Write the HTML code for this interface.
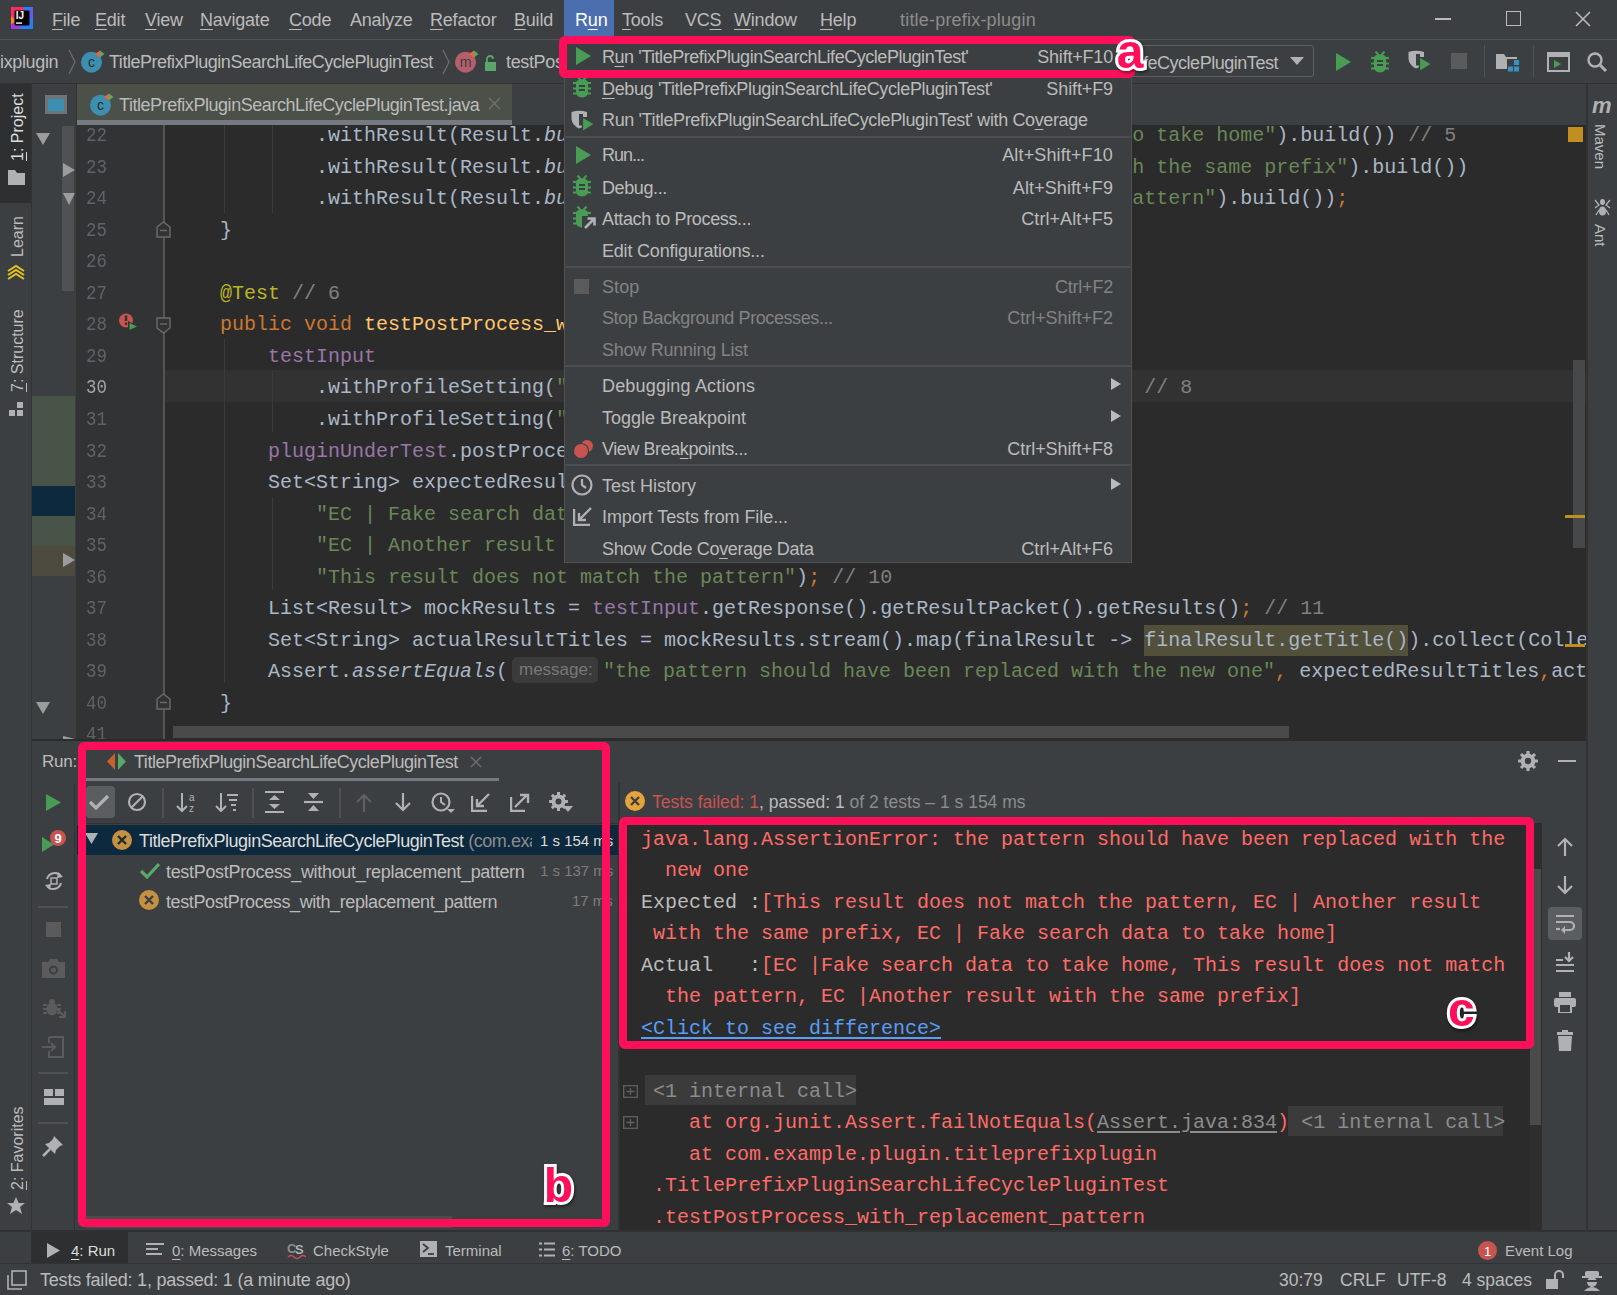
<!DOCTYPE html><html><head><meta charset="utf-8"><style>
*{margin:0;padding:0;box-sizing:border-box}
html,body{width:1617px;height:1295px;overflow:hidden;background:#3c3f41;font-family:"Liberation Sans", sans-serif;}
.a{position:absolute}
.t{position:absolute;white-space:pre;color:#bbbbbb;font-family:"Liberation Sans", sans-serif;font-size:17.5px;line-height:20px}
.m{position:absolute;white-space:pre;font-family:"Liberation Mono", monospace;font-size:20px;line-height:31.55px;color:#a9b7c6}
u{text-decoration:underline;text-underline-offset:3px}
.kw{color:#cc7832} .str{color:#6a8759} .ann{color:#bbb529} .cm{color:#808080} .fn{color:#ffc66d} .fld{color:#9876aa} .it{font-style:italic}
</style></head><body>
<div class="a" style="left:0;top:0;width:1617px;height:39px;background:#3c3f41"></div>
<div class="a" style="left:0;top:39px;width:1617px;height:1px;background:#515658"></div>
<svg class="a" style="left:11px;top:7px" width="22" height="22" viewBox="0 0 22 22">
<rect x="0" y="0" width="22" height="22" fill="#2a7ef5"/><path d="M0 0H11.5L14 3.5L9 14L0 22Z" fill="#fd2a63"/><path d="M0 9L3.5 12L3 18L0 20Z" fill="#f98a1c"/><path d="M0 17L4 15L11 19L7 22H0Z" fill="#a23ad8"/><path d="M19 2L22 0V10L19 12Z" fill="#6f55e8"/>
<rect x="3.5" y="3.5" width="15" height="15" rx="1" fill="#000"/>
<text x="4.8" y="12.3" font-family="Liberation Sans" font-weight="bold" font-size="10" fill="#fff">IJ</text><rect x="5" y="15.3" width="6" height="1.6" fill="#ddd"/></svg>
<div class="t" style="left:52px;top:9.76px;font-size:18px;letter-spacing:-0.2px;color:#bbbbbb;"><u>F</u>ile</div>
<div class="t" style="left:95px;top:9.76px;font-size:18px;letter-spacing:-0.2px;color:#bbbbbb;"><u>E</u>dit</div>
<div class="t" style="left:145px;top:9.76px;font-size:18px;letter-spacing:-0.2px;color:#bbbbbb;"><u>V</u>iew</div>
<div class="t" style="left:200px;top:9.76px;font-size:18px;letter-spacing:-0.2px;color:#bbbbbb;"><u>N</u>avigate</div>
<div class="t" style="left:289px;top:9.76px;font-size:18px;letter-spacing:-0.2px;color:#bbbbbb;"><u>C</u>ode</div>
<div class="t" style="left:350px;top:9.76px;font-size:18px;letter-spacing:-0.2px;color:#bbbbbb;">Analyze</div>
<div class="t" style="left:430px;top:9.76px;font-size:18px;letter-spacing:-0.2px;color:#bbbbbb;"><u>R</u>efactor</div>
<div class="t" style="left:514px;top:9.76px;font-size:18px;letter-spacing:-0.2px;color:#bbbbbb;"><u>B</u>uild</div>
<div class="a" style="left:564px;top:0;width:50px;height:39px;background:#4b6eaf"></div>
<div class="t" style="left:575px;top:9.76px;font-size:18px;letter-spacing:-0.2px;color:#ffffff;">R<u>u</u>n</div>
<div class="t" style="left:622px;top:9.76px;font-size:18px;letter-spacing:-0.2px;color:#bbbbbb;"><u>T</u>ools</div>
<div class="t" style="left:685px;top:9.76px;font-size:18px;letter-spacing:-0.2px;color:#bbbbbb;">VC<u>S</u></div>
<div class="t" style="left:734px;top:9.76px;font-size:18px;letter-spacing:-0.2px;color:#bbbbbb;"><u>W</u>indow</div>
<div class="t" style="left:820px;top:9.76px;font-size:18px;letter-spacing:-0.2px;color:#bbbbbb;"><u>H</u>elp</div>
<div class="t" style="left:900px;top:9.76px;font-size:18px;letter-spacing:0.2px;color:#8c8c8c;">title-prefix-plugin</div>
<div class="a" style="left:1435px;top:18px;width:16px;height:1.5px;background:#bbbbbb"></div>
<div class="a" style="left:1506px;top:11px;width:15px;height:15px;border:1.5px solid #bbbbbb"></div>
<svg class="a" style="left:1575px;top:11px" width="16" height="16"><path d="M1 1L15 15M15 1L1 15" stroke="#bbbbbb" stroke-width="1.5"/></svg>
<div class="a" style="left:0;top:40px;width:1617px;height:43px;background:#3c3f41"></div>
<div class="a" style="left:0;top:83px;width:1617px;height:1px;background:#323232"></div>
<div class="t" style="left:0px;top:52.36px;font-size:18px;letter-spacing:-0.35px;color:#bbbbbb;">ixplugin</div>
<svg class="a" style="left:67px;top:49px" width="10" height="26"><path d="M2 1L8 13L2 25" stroke="#6e6e6e" fill="none" stroke-width="1.2"/></svg>
<svg class="a" style="left:81px;top:49px" width="24" height="24" viewBox="0 0 24 24"><circle cx="10.5" cy="13.2" r="10.5" fill="#3d8fb0"/><text x="10.5" y="18" text-anchor="middle" font-family="Liberation Sans" font-size="14" fill="#2b2b2b">c</text><path d="M14 5L19 1.5L19 8.5Z" fill="#e8683a"/><path d="M19 1.5L23.5 5L19 8.5Z" fill="#59a869"/></svg>
<div class="t" style="left:109px;top:52.36px;font-size:18px;letter-spacing:-0.47px;color:#bbbbbb;">TitlePrefixPluginSearchLifeCyclePluginTest</div>
<svg class="a" style="left:441px;top:49px" width="10" height="26"><path d="M2 1L8 13L2 25" stroke="#6e6e6e" fill="none" stroke-width="1.2"/></svg>
<svg class="a" style="left:455px;top:49px" width="24" height="24" viewBox="0 0 24 24"><circle cx="10.5" cy="13.2" r="10.5" fill="#b55e6c"/><text x="10.5" y="18" text-anchor="middle" font-family="Liberation Sans" font-size="14" fill="#3c3f41">m</text><path d="M14 5L19 1.5L19 8.5Z" fill="#e8683a"/><path d="M19 1.5L23.5 5L19 8.5Z" fill="#59a869"/></svg>
<svg class="a" style="left:482px;top:54px" width="16" height="18"><rect x="3" y="8" width="11" height="9" fill="#59a869"/><path d="M5 8V5a3 3 0 0 1 6 0" stroke="#59a869" fill="none" stroke-width="1.8"/></svg>
<div class="t" style="left:506px;top:52.36px;font-size:18px;letter-spacing:-0.35px;color:#bbbbbb;">testPostProcess_with_replacement_pattern</div>
<div class="a" style="left:1100px;top:45px;width:214px;height:32px;border:1px solid #5e6060;border-radius:3px;background:#3c3f41"></div>
<div class="a" style="left:1101px;top:46px;width:190px;height:30px;overflow:hidden"><div class="t" style="right:13px;top:6.76px;font-size:18px;letter-spacing:-0.47px;color:#bbbbbb;">TitlePrefixPluginSearchLifeCyclePluginTest</div></div>
<svg class="a" style="left:1290px;top:57px" width="14" height="9"><path d="M0 0H14L7 8Z" fill="#afb1b3"/></svg>
<svg class="a" style="left:1336px;top:53px" width="15" height="18"><path d="M0 0L15 9.0L0 18Z" fill="#499c54"/></svg>
<svg class="a" style="left:1371px;top:51px" width="18" height="22" viewBox="0 0 18 22"><path d="M4.5 0.5L8 4.5M13.5 0.5L10 4.5" stroke="#499c54" stroke-width="2"/><path d="M3 7Q3 3.5 9 3.5Q15 3.5 15 7V15Q15 21.5 9 21.5Q3 21.5 3 15Z" fill="#499c54"/><rect x="0" y="6" width="18" height="2" fill="#499c54"/><rect x="0" y="11.5" width="18" height="2" fill="#499c54"/><rect x="0" y="16.5" width="18" height="2" fill="#499c54"/><rect x="6" y="9" width="6" height="2" fill="#3c3f41"/><rect x="6" y="13" width="6" height="2" fill="#3c3f41"/></svg>
<svg class="a" style="left:1408px;top:50px" width="24" height="22" viewBox="0 0 24 22"><path d="M0.5 2Q8 -0.5 16 2V7H12V4H8V15.5H12V16.5Q10 18 8 18.5Q1 15 0.5 9Z" fill="#afb1b3"/><path d="M11.5 7L23.5 14L11.5 21.5Z" fill="#499c54" stroke="#3c3f41" stroke-width="1.2"/></svg>
<div class="a" style="left:1451px;top:53px;width:16px;height:16px;background:#5b5b5b"></div>
<div class="a" style="left:1484px;top:45px;width:1px;height:32px;background:#515151"></div>
<svg class="a" style="left:1496px;top:51px" width="24" height="22"><path d="M0 3H8L10 6H21V18H0Z" fill="#afb1b3"/><rect x="11" y="8" width="13" height="14" fill="#3c3f41"/><rect x="18" y="9" width="5" height="5" fill="#3592c4"/><rect x="12" y="15.5" width="5" height="5" fill="#3592c4"/><rect x="18" y="15.5" width="5" height="5" fill="#3592c4"/></svg>
<div class="a" style="left:1533px;top:45px;width:1px;height:32px;background:#515151"></div>
<svg class="a" style="left:1547px;top:52px" width="23" height="20"><rect x="1" y="1" width="21" height="18" fill="none" stroke="#afb1b3" stroke-width="2"/><rect x="1" y="1" width="21" height="4" fill="#afb1b3"/><path d="M7 8L14 12L7 16Z" fill="#499c54"/></svg>
<svg class="a" style="left:1586px;top:51px" width="22" height="22"><circle cx="9" cy="9" r="6.5" stroke="#afb1b3" stroke-width="2.4" fill="none"/><path d="M14 14L20 20" stroke="#afb1b3" stroke-width="3"/></svg>
<div class="a" style="left:0;top:84px;width:31px;height:1148px;background:#3c3f41"></div>
<div class="a" style="left:0;top:84px;width:31px;height:119px;background:#2d2f30"></div>
<div class="a" style="left:31px;top:84px;width:1px;height:1148px;background:#323232"></div>
<div class="t" style="left:18px;top:161px;font-size:16px;line-height:16px;color:#dddddd;transform-origin:0 0;transform:rotate(-90deg) translate(0,-8.0px)"><u>1</u>: Project</div>
<svg class="a" style="left:8px;top:170px" width="17" height="15"><path d="M0 0H7L9 3H17V15H0Z" fill="#afb1b3"/></svg>
<div class="t" style="left:18px;top:257px;font-size:16px;line-height:16px;color:#bbbbbb;transform-origin:0 0;transform:rotate(-90deg) translate(0,-8.0px)">Learn</div>
<svg class="a" style="left:6px;top:264px" width="20" height="18"><path d="M2 7L10 2L18 7M2 11L10 6L18 11M2 15L10 10L18 15" stroke="#e5c31c" stroke-width="2" fill="none"/></svg>
<div class="t" style="left:18px;top:392px;font-size:16px;line-height:16px;color:#bbbbbb;transform-origin:0 0;transform:rotate(-90deg) translate(0,-8.0px)"><u>7</u>: Structure</div>
<svg class="a" style="left:9px;top:401px" width="15" height="15"><rect x="0" y="9" width="6" height="6" fill="#afb1b3"/><rect x="8" y="9" width="6" height="6" fill="#afb1b3"/><rect x="8" y="1" width="6" height="6" fill="#afb1b3"/></svg>
<div class="t" style="left:18px;top:1190px;font-size:16px;line-height:16px;color:#bbbbbb;transform-origin:0 0;transform:rotate(-90deg) translate(0,-8.0px)"><u>2</u>: Favorites</div>
<svg class="a" style="left:7px;top:1197px" width="18" height="17"><path d="M9 0L11.6 6H18L13 10L15 17L9 13L3 17L5 10L0 6H6.4Z" fill="#afb1b3"/></svg>
<div class="a" style="left:32px;top:84px;width:44px;height:657px;background:#3c3f41"></div>
<div class="a" style="left:76px;top:84px;width:1px;height:657px;background:#323232"></div>
<svg class="a" style="left:45px;top:95px" width="22" height="19"><rect x="0" y="0" width="22" height="19" fill="#6f7577"/><rect x="3" y="4" width="16" height="12" fill="#3b90b2"/></svg>
<div class="a" style="left:62px;top:126px;width:12px;height:165px;background:#4f5255"></div>
<svg class="a" style="left:36px;top:133px" width="14" height="12"><path d="M0 0H14L7.0 12Z" fill="#9c9c9c"/></svg>
<svg class="a" style="left:63px;top:163px" width="12" height="14"><path d="M0 0L12 7.0L0 14Z" fill="#9c9c9c"/></svg>
<svg class="a" style="left:63px;top:193px" width="12" height="12"><path d="M0 0H12L6.0 12Z" fill="#9c9c9c"/></svg>
<div class="a" style="left:32px;top:396px;width:43px;height:90px;background:#495449"></div>
<div class="a" style="left:32px;top:486px;width:43px;height:30px;background:#0d293e"></div>
<div class="a" style="left:32px;top:516px;width:43px;height:30px;background:#495449"></div>
<div class="a" style="left:32px;top:546px;width:43px;height:30px;background:#4d4a40"></div>
<svg class="a" style="left:63px;top:553px" width="12" height="14"><path d="M0 0L12 7.0L0 14Z" fill="#9c9c9c"/></svg>
<svg class="a" style="left:36px;top:702px" width="14" height="12"><path d="M0 0H14L7.0 12Z" fill="#9c9c9c"/></svg>
<svg class="a" style="left:63px;top:736px" width="12" height="6"><path d="M0 0L12 3.0L0 6Z" fill="#9c9c9c"/></svg>
<div class="a" style="left:77px;top:84px;width:1510px;height:41px;background:#3c3f41"></div>
<div class="a" style="left:77px;top:84px;width:435px;height:36px;background:#4b5048"></div>
<div class="a" style="left:77px;top:120px;width:435px;height:5px;background:#747a80"></div>
<svg class="a" style="left:90px;top:92px" width="24" height="24" viewBox="0 0 24 24"><circle cx="10.5" cy="13.2" r="10.5" fill="#3d8fb0"/><text x="10.5" y="18" text-anchor="middle" font-family="Liberation Sans" font-size="14" fill="#2b2b2b">c</text><path d="M14 5L19 1.5L19 8.5Z" fill="#e8683a"/><path d="M19 1.5L23.5 5L19 8.5Z" fill="#59a869"/></svg>
<div class="t" style="left:119px;top:94.76px;font-size:18px;letter-spacing:-0.45px;color:#bbbbbb;">TitlePrefixPluginSearchLifeCyclePluginTest.java</div>
<svg class="a" style="left:488px;top:97px" width="13" height="13"><path d="M1 1L12 12M12 1L1 12" stroke="#707070" stroke-width="1.4"/></svg>
<div class="a" style="left:77px;top:125px;width:1510px;height:614px;background:#2b2b2b;overflow:hidden">
<div class="a" style="left:0;top:0;width:87px;height:614px;background:#313335"></div>
<div class="a" style="left:87px;top:245.4px;width:1423px;height:32px;background:#323232"></div>
<div class="m" style="left:9px;top:-5.0px;color:#606366;transform:scaleX(0.87);transform-origin:0 0">22</div>
<div class="m" style="left:9px;top:26.55px;color:#606366;transform:scaleX(0.87);transform-origin:0 0">23</div>
<div class="m" style="left:9px;top:58.1px;color:#606366;transform:scaleX(0.87);transform-origin:0 0">24</div>
<div class="m" style="left:9px;top:89.65px;color:#606366;transform:scaleX(0.87);transform-origin:0 0">25</div>
<div class="m" style="left:9px;top:121.2px;color:#606366;transform:scaleX(0.87);transform-origin:0 0">26</div>
<div class="m" style="left:9px;top:152.75px;color:#606366;transform:scaleX(0.87);transform-origin:0 0">27</div>
<div class="m" style="left:9px;top:184.3px;color:#606366;transform:scaleX(0.87);transform-origin:0 0">28</div>
<div class="m" style="left:9px;top:215.85px;color:#606366;transform:scaleX(0.87);transform-origin:0 0">29</div>
<div class="m" style="left:9px;top:247.4px;color:#a4a3a3;transform:scaleX(0.87);transform-origin:0 0">30</div>
<div class="m" style="left:9px;top:278.95px;color:#606366;transform:scaleX(0.87);transform-origin:0 0">31</div>
<div class="m" style="left:9px;top:310.5px;color:#606366;transform:scaleX(0.87);transform-origin:0 0">32</div>
<div class="m" style="left:9px;top:342.05px;color:#606366;transform:scaleX(0.87);transform-origin:0 0">33</div>
<div class="m" style="left:9px;top:373.6px;color:#606366;transform:scaleX(0.87);transform-origin:0 0">34</div>
<div class="m" style="left:9px;top:405.15000000000003px;color:#606366;transform:scaleX(0.87);transform-origin:0 0">35</div>
<div class="m" style="left:9px;top:436.7px;color:#606366;transform:scaleX(0.87);transform-origin:0 0">36</div>
<div class="m" style="left:9px;top:468.25px;color:#606366;transform:scaleX(0.87);transform-origin:0 0">37</div>
<div class="m" style="left:9px;top:499.8px;color:#606366;transform:scaleX(0.87);transform-origin:0 0">38</div>
<div class="m" style="left:9px;top:531.35px;color:#606366;transform:scaleX(0.87);transform-origin:0 0">39</div>
<div class="m" style="left:9px;top:562.9px;color:#606366;transform:scaleX(0.87);transform-origin:0 0">40</div>
<div class="m" style="left:9px;top:594.45px;color:#606366;transform:scaleX(0.87);transform-origin:0 0">41</div>
<div class="a" style="left:85.5px;top:0;width:2px;height:614px;background:#555555"></div>
<div class="a" style="left:147px;top:0px;width:1px;height:88px;background:#3b3b3b"></div>
<div class="a" style="left:195px;top:0px;width:1px;height:88px;background:#3b3b3b"></div>
<div class="a" style="left:147px;top:214px;width:1px;height:344px;background:#3b3b3b"></div>
<div class="a" style="left:195px;top:246px;width:1px;height:61px;background:#3b3b3b"></div>
<div class="a" style="left:195px;top:372px;width:1px;height:93px;background:#3b3b3b"></div>
<svg class="a" style="left:79px;top:96px" width="15" height="17"><path d="M1 16V6L7.5 1L14 6V16Z" fill="#313335" stroke="#6b6b6b" stroke-width="1.4"/><path d="M4 9.5H11" stroke="#6b6b6b" stroke-width="1.4"/></svg>
<svg class="a" style="left:79px;top:192px" width="15" height="17"><path d="M1 1V11L7.5 16L14 11V1Z" fill="#313335" stroke="#6b6b6b" stroke-width="1.4"/><path d="M4 7H11" stroke="#6b6b6b" stroke-width="1.4"/></svg>
<svg class="a" style="left:79px;top:568px" width="15" height="17"><path d="M1 16V6L7.5 1L14 6V16Z" fill="#313335" stroke="#6b6b6b" stroke-width="1.4"/><path d="M4 9.5H11" stroke="#6b6b6b" stroke-width="1.4"/></svg>
<svg class="a" style="left:41px;top:188px" width="22" height="20"><circle cx="8" cy="7.5" r="7" fill="#c75450"/><rect x="6.8" y="2.5" width="2.4" height="5.5" fill="#313335"/><rect x="6.8" y="9.5" width="2.4" height="2.4" fill="#313335"/><path d="M10 8L20 13.5L10 19Z" fill="#313335"/><path d="M11.5 10L19 13.5L11.5 17Z" fill="#499c54"/></svg>
<div class="m" style="left:95px;top:-5.0px">            .withResult(Result.<span class="it">bu</span>                                               <span class="str">o take home&quot;</span>).build()) <span class="cm">// 5</span></div>
<div class="m" style="left:95px;top:26.55px">            .withResult(Result.<span class="it">bu</span>                                               <span class="str">h the same prefix&quot;</span>).build())</div>
<div class="m" style="left:95px;top:58.1px">            .withResult(Result.<span class="it">bu</span>                                               <span class="str">attern&quot;</span>).build())<span class="kw">;</span></div>
<div class="m" style="left:95px;top:89.65px">    }</div>
<div class="m" style="left:95px;top:152.75px">    <span class="ann">@Test</span> <span class="cm">// 6</span></div>
<div class="m" style="left:95px;top:184.3px">    <span class="kw">public void </span><span class="fn">testPostProcess_w</span></div>
<div class="m" style="left:95px;top:215.85px">        <span class="fld">testInput</span></div>
<div class="m" style="left:95px;top:247.4px">            .withProfileSetting(<span class="str">&quot;</span>                                                <span class="cm">// 8</span></div>
<div class="m" style="left:95px;top:278.95px">            .withProfileSetting(<span class="str">&quot;</span></div>
<div class="m" style="left:95px;top:310.5px">        <span class="fld">pluginUnderTest</span>.postProce</div>
<div class="m" style="left:95px;top:342.05px">        Set&lt;String&gt; expectedResul</div>
<div class="m" style="left:95px;top:373.6px">            <span class="str">&quot;EC | Fake search dat</span></div>
<div class="m" style="left:95px;top:405.15000000000003px">            <span class="str">&quot;EC | Another result </span></div>
<div class="m" style="left:95px;top:436.7px">            <span class="str">&quot;This result does not match the pattern&quot;</span>)<span class="kw">;</span> <span class="cm">// 10</span></div>
<div class="m" style="left:95px;top:468.25px">        List&lt;Result&gt; mockResults = <span class="fld">testInput</span>.getResponse().getResultPacket().getResults()<span class="kw">;</span> <span class="cm">// 11</span></div>
<div class="a" style="left:1067px;top:500.3px;width:264px;height:31px;background:#524f3b"></div>
<div class="m" style="left:95px;top:499.8px">        Set&lt;String&gt; actualResultTitles = mockResults.stream().map(finalResult -&gt; finalResult.getTitle()).collect(Colle</div>
<div class="m" style="left:95px;top:531.35px">        Assert.<span class="it">assertEquals</span>(</div>
<div class="a" style="left:435px;top:532px;width:86px;height:26px;background:#3b3b3b;border-radius:5px"></div>
<div class="t" style="left:442px;top:535px;font-size:17px;color:#787878">message:</div>
<div class="m" style="left:526px;top:531.35px"><span class="str">&quot;the pattern should have been replaced with the new one&quot;</span><span class="kw">,</span> expectedResultTitles<span class="kw">,</span>act</div>
<div class="m" style="left:95px;top:562.9px">    }</div>
<div class="a" style="left:96px;top:601px;width:1116px;height:12px;background:#4a4a4a"></div>
<div class="a" style="left:1496px;top:235px;width:12px;height:188px;background:#46484a"></div>
<div class="a" style="left:1491px;top:2px;width:15px;height:15px;background:#c08f20"></div>
<div class="a" style="left:1488px;top:390px;width:20px;height:3px;background:#c08f20"></div>
<div class="a" style="left:1488px;top:519px;width:20px;height:3px;background:#c08f20"></div>
</div>
<div class="a" style="left:32px;top:739px;width:1555px;height:2px;background:#2b2b2b"></div>
<div class="a" style="left:1586px;top:84px;width:2px;height:1148px;background:#323232"></div>
<div class="a" style="left:1588px;top:84px;width:29px;height:1148px;background:#3c3f41"></div>
<div class="t" style="left:1592px;top:96px;font-size:22px;font-weight:bold;font-style:italic;color:#afb1b3;letter-spacing:-1px">m</div>
<div class="t" style="left:1608px;top:124px;font-size:15px;line-height:15px;color:#bbbbbb;transform-origin:0 0;transform:rotate(90deg)">Maven</div>
<svg class="a" style="left:1594px;top:198px" width="17" height="18"><ellipse cx="8.5" cy="4" rx="2.5" ry="3" fill="#afb1b3"/><ellipse cx="8.5" cy="13" rx="3.5" ry="4.5" fill="#afb1b3"/><path d="M1 2L5 7L1 10M16 2L12 7L16 10M2 17L5 12M15 17L12 12" stroke="#afb1b3" stroke-width="1.3" fill="none"/></svg>
<div class="t" style="left:1608px;top:224px;font-size:15px;line-height:15px;color:#bbbbbb;transform-origin:0 0;transform:rotate(90deg)">Ant</div>
<div class="a" style="left:32px;top:741px;width:1554px;height:490px;background:#3c3f41"></div>
<div class="t" style="left:42px;top:752.11px;font-size:17px;letter-spacing:-0.2px;color:#bbbbbb;">Run:</div>
<svg class="a" style="left:107px;top:753px" width="20" height="17"><path d="M8 0L0 8.5L8 17Z" fill="#c4622d"/><path d="M11 0L19 8.5L11 17Z" fill="#59a869"/></svg>
<div class="t" style="left:134px;top:751.76px;font-size:18px;letter-spacing:-0.47px;color:#bbbbbb;">TitlePrefixPluginSearchLifeCyclePluginTest</div>
<svg class="a" style="left:470px;top:756px" width="12" height="12"><path d="M1 1L11 11M11 1L1 11" stroke="#707070" stroke-width="1.3"/></svg>
<div class="a" style="left:86px;top:778px;width:413px;height:3px;background:#747a80"></div>
<svg class="a" style="left:1518px;top:751px" width="20" height="20"><path d="M17.0 8.4 L19.9 8.4 L19.9 11.6 L17.0 11.6 L16.1 13.9 L18.1 15.9 L15.9 18.1 L13.9 16.1 L11.6 17.0 L11.6 19.9 L8.4 19.9 L8.4 17.0 L6.1 16.1 L4.1 18.1 L1.9 15.9 L3.9 13.9 L3.0 11.6 L0.1 11.6 L0.1 8.4 L3.0 8.4 L3.9 6.1 L1.9 4.1 L4.1 1.9 L6.1 3.9 L8.4 3.0 L8.4 0.1 L11.6 0.1 L11.6 3.0 L13.9 3.9 L15.9 1.9 L18.1 4.1 L16.1 6.1Z" fill="#afb1b3"/><circle cx="10.0" cy="10.0" r="7.199999999999999" fill="#afb1b3"/><circle cx="10.0" cy="10.0" r="3.2" fill="#3c3f41"/></svg>
<div class="a" style="left:1558px;top:760px;width:18px;height:2px;background:#afb1b3"></div>
<div class="a" style="left:74px;top:783px;width:1px;height:448px;background:#323232"></div>
<svg class="a" style="left:46px;top:794px" width="15" height="17"><path d="M0 0L15 8.5L0 17Z" fill="#499c54"/></svg>
<svg class="a" style="left:41px;top:829px" width="26" height="24"><path d="M1 8L13 15.5L1 23Z" fill="#499c54"/><circle cx="17" cy="9" r="8" fill="#c75450"/><text x="17" y="14" text-anchor="middle" font-family="Liberation Sans" font-weight="bold" font-size="13" fill="#fff">9</text></svg>
<svg class="a" style="left:43px;top:869px" width="22" height="24"><path d="M4 10A8 8 0 0 1 18 7M18 14A8 8 0 0 1 4 17" stroke="#afb1b3" stroke-width="2" fill="none"/><path d="M15 3L20 8L14 9Z M7 21L2 16L8 15Z" fill="#afb1b3"/><rect x="8" y="9" width="6" height="6" fill="none" stroke="#afb1b3" stroke-width="1.5"/></svg>
<div class="a" style="left:38px;top:906px;width:30px;height:2px;background:#515151"></div>
<div class="a" style="left:46px;top:922px;width:15px;height:15px;background:#5b5b5b"></div>
<svg class="a" style="left:42px;top:958px" width="23" height="20"><path d="M0 4H6L8 1H15L17 4H23V20H0Z" fill="#5b5b5b"/><circle cx="11.5" cy="12" r="4.5" fill="#3c3f41"/><circle cx="11.5" cy="12" r="2.5" fill="#5b5b5b"/></svg>
<svg class="a" style="left:43px;top:997px" width="24" height="22"><ellipse cx="9" cy="12" rx="5.5" ry="6.5" fill="#5b5b5b"/><circle cx="9" cy="5" r="3" fill="#5b5b5b"/><path d="M0 8h4M14 8h4M0 12h4M14 12h4M0 16h4M14 16h4" stroke="#5b5b5b" stroke-width="1.8"/><path d="M14 12L22 20M22 14V20H16" stroke="#5b5b5b" stroke-width="2" fill="none"/></svg>
<svg class="a" style="left:42px;top:1036px" width="22" height="22"><path d="M7 1H21V21H7V15M7 7V1" stroke="#5b5b5b" stroke-width="2" fill="none"/><path d="M0 11H13M9 7L13 11L9 15" stroke="#5b5b5b" stroke-width="2" fill="none"/></svg>
<div class="a" style="left:38px;top:1072px;width:30px;height:2px;background:#515151"></div>
<svg class="a" style="left:44px;top:1089px" width="20" height="16"><rect x="0" y="0" width="9" height="7" fill="#afb1b3"/><rect x="11" y="0" width="9" height="7" fill="#afb1b3"/><rect x="0" y="9" width="20" height="7" fill="#afb1b3"/></svg>
<div class="a" style="left:38px;top:1122px;width:30px;height:2px;background:#515151"></div>
<svg class="a" style="left:42px;top:1135px" width="22" height="22"><path d="M12 1L21 10L18 11L14 15L13 19L3 9L7 8L11 4Z" fill="#afb1b3"/><path d="M8 14L1 21" stroke="#afb1b3" stroke-width="2.5"/></svg>
<div class="a" style="left:86px;top:786px;width:29px;height:32px;background:#5b5e61;border-radius:4px"></div>
<svg class="a" style="left:88px;top:793px" width="22" height="18"><path d="M2 9L8 15L20 3" stroke="#afb1b3" stroke-width="3.2" fill="none"/></svg>
<svg class="a" style="left:127px;top:792px" width="20" height="20"><circle cx="10" cy="10" r="8" stroke="#afb1b3" stroke-width="2.2" fill="none"/><path d="M4.5 15.5L15.5 4.5" stroke="#afb1b3" stroke-width="2.2"/></svg>
<div class="a" style="left:162px;top:788px;width:2px;height:30px;background:#515151"></div>
<svg class="a" style="left:176px;top:792px" width="22" height="21"><path d="M6 1V19M1 14L6 19L11 14" stroke="#afb1b3" stroke-width="2" fill="none"/><text x="13" y="9" font-family="Liberation Sans" font-size="10" fill="#afb1b3">a</text><text x="13" y="20" font-family="Liberation Sans" font-size="10" fill="#afb1b3">z</text></svg>
<svg class="a" style="left:215px;top:792px" width="24" height="20"><path d="M6 1V19M1 14L6 19L11 14" stroke="#afb1b3" stroke-width="2" fill="none"/><path d="M12 3H23M14 8H22M16 13H21M18 18H21" stroke="#afb1b3" stroke-width="2"/></svg>
<div class="a" style="left:252px;top:788px;width:2px;height:30px;background:#515151"></div>
<svg class="a" style="left:265px;top:791px" width="19" height="22"><path d="M0 1H19M0 21H19" stroke="#afb1b3" stroke-width="2.2"/><path d="M9.5 4L15 9H4Z M9.5 18L15 13H4Z" fill="#afb1b3"/></svg>
<svg class="a" style="left:304px;top:791px" width="19" height="22"><path d="M0 11H19" stroke="#afb1b3" stroke-width="2.2"/><path d="M9.5 8L15 2H4Z M9.5 14L15 20H4Z" fill="#afb1b3"/></svg>
<div class="a" style="left:339px;top:788px;width:2px;height:30px;background:#515151"></div>
<svg class="a" style="left:356px;top:793px" width="16" height="19"><path d="M8 19V2M1 9L8 2L15 9" stroke="#5e6060" stroke-width="2.2" fill="none"/></svg>
<svg class="a" style="left:395px;top:793px" width="16" height="19"><path d="M8 0V17M1 10L8 17L15 10" stroke="#afb1b3" stroke-width="2.2" fill="none"/></svg>
<svg class="a" style="left:431px;top:792px" width="25" height="23"><circle cx="10" cy="10" r="8.5" stroke="#afb1b3" stroke-width="2.2" fill="none"/><path d="M10 5V10L14 13" stroke="#afb1b3" stroke-width="2" fill="none"/><path d="M16 17H24L20 21Z" fill="#afb1b3"/></svg>
<svg class="a" style="left:471px;top:793px" width="20" height="19"><path d="M1 3V18H16" stroke="#afb1b3" stroke-width="2.4" fill="none"/><path d="M6 13L18 1M6 6V13H13" stroke="#afb1b3" stroke-width="2.4" fill="none"/></svg>
<svg class="a" style="left:510px;top:793px" width="20" height="19"><path d="M1 4V18H15" stroke="#afb1b3" stroke-width="2.4" fill="none"/><path d="M5 14L17 2M10 2H18V10" stroke="#afb1b3" stroke-width="2.4" fill="none"/></svg>
<svg class="a" style="left:549px;top:792px" width="19" height="19"><path d="M16.2 8.0 L18.9 8.0 L18.9 11.0 L16.2 11.0 L15.3 13.2 L17.2 15.1 L15.1 17.2 L13.2 15.3 L11.0 16.2 L11.0 18.9 L8.0 18.9 L8.0 16.2 L5.8 15.3 L3.9 17.2 L1.8 15.1 L3.7 13.2 L2.8 11.0 L0.1 11.0 L0.1 8.0 L2.8 8.0 L3.7 5.8 L1.8 3.9 L3.9 1.8 L5.8 3.7 L8.0 2.8 L8.0 0.1 L11.0 0.1 L11.0 2.8 L13.2 3.7 L15.1 1.8 L17.2 3.9 L15.3 5.8Z" fill="#afb1b3"/><circle cx="9.5" cy="9.5" r="6.84" fill="#afb1b3"/><circle cx="9.5" cy="9.5" r="3.04" fill="#3c3f41"/></svg>
<svg class="a" style="left:563px;top:806px" width="10" height="6"><path d="M0 0H10L5 6Z" fill="#afb1b3"/></svg>
<div class="a" style="left:77px;top:823px;width:542px;height:1px;background:#323232"></div>
<div class="a" style="left:77px;top:825px;width:541px;height:30px;background:#0d293e"></div>
<svg class="a" style="left:85px;top:833px" width="13" height="11"><path d="M0 0H13L6.5 11Z" fill="#afb1b3"/></svg>
<svg class="a" style="left:112px;top:830px" width="20" height="20"><circle cx="10.0" cy="10.0" r="10.0" fill="#c49140"/><path d="M6.0 6.0L14.0 14.0M14.0 6.0L6.0 14.0" stroke="#1f2a33" stroke-width="2.4"/></svg>
<div class="t" style="left:139px;top:831.36px;font-size:18px;letter-spacing:-0.45px;color:#dddddd;">TitlePrefixPluginSearchLifeCyclePluginTest <span style="color:#8c8c8c">(com.exa</span></div>
<div class="a" style="left:532px;top:825px;width:86px;height:30px;background:#0d293e"></div>
<div class="t" style="left:540px;top:830.80px;font-size:15px;letter-spacing:0px;color:#dddddd;">1 s 154 ms</div>
<svg class="a" style="left:140px;top:862px" width="20" height="17"><path d="M1 9L7 15L19 2" stroke="#59a869" stroke-width="3.2" fill="none"/></svg>
<div class="t" style="left:166px;top:861.86px;font-size:18px;letter-spacing:-0.32px;color:#bbbbbb;">testPostProcess_without_replacement_pattern</div>
<div class="t" style="left:540px;top:861.30px;font-size:15px;letter-spacing:0px;color:#7c7c7c;">1 s 137 ms</div>
<svg class="a" style="left:139px;top:890px" width="20" height="20"><circle cx="10.0" cy="10.0" r="10.0" fill="#c49140"/><path d="M6.0 6.0L14.0 14.0M14.0 6.0L6.0 14.0" stroke="#3c3f41" stroke-width="2.4"/></svg>
<div class="t" style="left:166px;top:891.76px;font-size:18px;letter-spacing:-0.4px;color:#bbbbbb;">testPostProcess_with_replacement_pattern</div>
<div class="t" style="left:572px;top:891.30px;font-size:15px;letter-spacing:0px;color:#7c7c7c;">17 ms</div>
<div class="a" style="left:86px;top:1216px;width:366px;height:12px;background:#4a4c4e"></div>
<div class="a" style="left:618px;top:783px;width:2px;height:448px;background:#323232"></div>
<svg class="a" style="left:625px;top:791px" width="20" height="20"><circle cx="10.0" cy="10.0" r="10.0" fill="#e5a43b"/><path d="M6.0 6.0L14.0 14.0M14.0 6.0L6.0 14.0" stroke="#3c3f41" stroke-width="2.4"/></svg>
<div class="t" style="left:652px;top:792.44px;font-size:17.5px;letter-spacing:0px;color:#c75450;">Tests failed: 1<span style="color:#bbbbbb">, passed: 1</span><span style="color:#8c8c8c"> of 2 tests – 1 s 154 ms</span></div>
<div class="a" style="left:620px;top:823px;width:922px;height:408px;background:#2b2b2b"></div>
<div class="a" style="left:1529px;top:823px;width:13px;height:408px;background:#2e2e2e"></div>
<div class="a" style="left:1530px;top:869px;width:11px;height:256px;background:#4a4a4a"></div>
<div class="m" style="left:641px;top:824.0px;color:#ff6b68">java.lang.AssertionError: the pattern should have been replaced with the</div>
<div class="m" style="left:641px;top:855.0px;color:#ff6b68">  new one</div>
<div class="m" style="left:641px;top:887.0px;color:#ff6b68"><span style="color:#bbbbbb">Expected :</span>[This result does not match the pattern, EC | Another result</div>
<div class="m" style="left:641px;top:918.0px;color:#ff6b68"> with the same prefix, EC | Fake search data to take home]</div>
<div class="m" style="left:641px;top:950.0px;color:#ff6b68"><span style="color:#bbbbbb">Actual   :</span>[EC |Fake search data to take home, This result does not match</div>
<div class="m" style="left:641px;top:981.0px;color:#ff6b68">  the pattern, EC |Another result with the same prefix]</div>
<div class="m" style="left:641px;top:1013.0px;color:#ff6b68"><span style="color:#589df6;text-decoration:underline;text-underline-offset:3px">&lt;Click to see difference&gt;</span></div>
<div class="a" style="left:645px;top:1075px;width:211px;height:30px;background:#3b3b3b"></div>
<div class="a" style="left:1288px;top:1106px;width:215px;height:30px;background:#3b3b3b"></div>
<svg class="a" style="left:623px;top:1085px" width="15" height="13"><rect x="0.7" y="0.7" width="13.6" height="11.6" fill="none" stroke="#606060" stroke-width="1.3"/><path d="M3.5 6.5H11.5M7.5 3V10" stroke="#606060" stroke-width="1.3"/></svg>
<svg class="a" style="left:623px;top:1116px" width="15" height="13"><rect x="0.7" y="0.7" width="13.6" height="11.6" fill="none" stroke="#606060" stroke-width="1.3"/><path d="M3.5 6.5H11.5M7.5 3V10" stroke="#606060" stroke-width="1.3"/></svg>
<div class="m" style="left:641px;top:1076.0px;color:#ff6b68"><span style="color:#8c8c8c"> &lt;1 internal call&gt;</span></div>
<div class="m" style="left:641px;top:1107.0px;color:#ff6b68">    at org.junit.Assert.failNotEquals(<span style="color:#8c8c8c;text-decoration:underline;text-underline-offset:3px">Assert.java:834</span>) <span style="color:#8c8c8c">&lt;1 internal call&gt;</span></div>
<div class="m" style="left:641px;top:1139.0px;color:#ff6b68">    at com.example.plugin.titleprefixplugin</div>
<div class="m" style="left:641px;top:1170.0px;color:#ff6b68"> .TitlePrefixPluginSearchLifeCyclePluginTest</div>
<div class="m" style="left:641px;top:1202.0px;color:#ff6b68"> .testPostProcess_with_replacement_pattern</div>
<svg class="a" style="left:1556px;top:837px" width="18" height="19"><path d="M9 19V2M2 9L9 2L16 9" stroke="#afb1b3" stroke-width="2.2" fill="none"/></svg>
<svg class="a" style="left:1556px;top:876px" width="18" height="19"><path d="M9 0V17M2 10L9 17L16 10" stroke="#afb1b3" stroke-width="2.2" fill="none"/></svg>
<div class="a" style="left:1548px;top:907px;width:34px;height:33px;background:#5b5e61;border-radius:4px"></div>
<svg class="a" style="left:1555px;top:913px" width="20" height="21"><path d="M1 3H19M1 9H15A4 4 0 0 1 15 17H9" stroke="#afb1b3" stroke-width="2.2" fill="none"/><path d="M10 13L6 17L10 21Z" fill="#afb1b3"/><path d="M1 16H5" stroke="#afb1b3" stroke-width="2.2"/></svg>
<svg class="a" style="left:1555px;top:952px" width="20" height="20"><path d="M1 8H8M1 13H19M1 19H19M14 0V9M10 5L14 9L18 5" stroke="#afb1b3" stroke-width="2.2" fill="none"/></svg>
<svg class="a" style="left:1554px;top:992px" width="22" height="21"><rect x="5" y="0" width="12" height="5" fill="#afb1b3"/><rect x="0" y="6" width="22" height="9" rx="2" fill="#afb1b3"/><rect x="5" y="12" width="12" height="9" fill="#3c3f41" stroke="#afb1b3" stroke-width="2"/></svg>
<svg class="a" style="left:1557px;top:1030px" width="16" height="21"><rect x="0" y="2" width="16" height="3" fill="#afb1b3"/><rect x="5" y="0" width="6" height="3" fill="#afb1b3"/><path d="M1 6H15L14 21H2Z" fill="#afb1b3"/></svg>
<div class="a" style="left:0;top:1230px;width:1617px;height:2px;background:#2f3133"></div>
<div class="a" style="left:0;top:1232px;width:1617px;height:31px;background:#3c3f41"></div>
<div class="a" style="left:31px;top:1232px;width:97px;height:31px;background:#2d2f30"></div>
<svg class="a" style="left:47px;top:1243px" width="13" height="15"><path d="M0 0L13 7.5L0 15Z" fill="#afb1b3"/></svg>
<div class="t" style="left:71px;top:1241.10px;font-size:15px;letter-spacing:0px;color:#dddddd;"><u>4</u>: Run</div>
<svg class="a" style="left:146px;top:1243px" width="18" height="14"><path d="M0 1H18M0 6H12M0 11H16" stroke="#afb1b3" stroke-width="2.2"/></svg>
<div class="t" style="left:172px;top:1241.10px;font-size:15px;letter-spacing:0px;color:#bbbbbb;"><u>0</u>: Messages</div>
<svg class="a" style="left:287px;top:1240px" width="19" height="20"><text x="0" y="13" font-family="Liberation Sans" font-weight="bold" font-size="13" fill="#8c8c8c">C</text><text x="8" y="14" font-family="Liberation Sans" font-weight="bold" font-size="13" fill="#afb1b3">S</text><path d="M1 17Q4 14 7 17T13 17T19 17" stroke="#c75450" stroke-width="1.5" fill="none"/></svg>
<div class="t" style="left:313px;top:1241.10px;font-size:15px;letter-spacing:0px;color:#bbbbbb;">CheckStyle</div>
<svg class="a" style="left:420px;top:1241px" width="17" height="16"><rect x="0" y="0" width="17" height="16" fill="#afb1b3"/><path d="M3 3L8 7L3 11" stroke="#3c3f41" stroke-width="1.8" fill="none"/><path d="M8 13H14" stroke="#3c3f41" stroke-width="1.8"/></svg>
<div class="t" style="left:445px;top:1241.10px;font-size:15px;letter-spacing:0px;color:#bbbbbb;">Terminal</div>
<svg class="a" style="left:539px;top:1242px" width="16" height="15"><path d="M0 1.5H3M0 7.5H3M0 13.5H3M5 1.5H16M5 7.5H16M5 13.5H16" stroke="#afb1b3" stroke-width="2.2"/></svg>
<div class="t" style="left:562px;top:1241.10px;font-size:15px;letter-spacing:0px;color:#bbbbbb;"><u>6</u>: TODO</div>
<svg class="a" style="left:1478px;top:1241px" width="19" height="19"><circle cx="9.5" cy="9.5" r="9.5" fill="#c75450"/><text x="9.5" y="14.5" text-anchor="middle" font-family="Liberation Sans" font-size="13" fill="#fff">1</text></svg>
<div class="t" style="left:1505px;top:1241.00px;font-size:15px;letter-spacing:0px;color:#bbbbbb;">Event Log</div>
<div class="a" style="left:0;top:1263px;width:1617px;height:1px;background:#323232"></div>
<div class="a" style="left:0;top:1264px;width:1617px;height:31px;background:#3c3f41"></div>
<svg class="a" style="left:7px;top:1270px" width="20" height="20"><rect x="5" y="1" width="14" height="14" fill="none" stroke="#afb1b3" stroke-width="1.6"/><path d="M1 5V19H15" stroke="#afb1b3" stroke-width="1.6" fill="none"/></svg>
<div class="t" style="left:40px;top:1269.96px;font-size:18px;letter-spacing:-0.21px;color:#bbbbbb;">Tests failed: 1, passed: 1 (a minute ago)</div>
<div class="t" style="left:1279px;top:1270.14px;font-size:17.5px;letter-spacing:0px;color:#bbbbbb;">30:79</div>
<div class="t" style="left:1340px;top:1270.14px;font-size:17.5px;letter-spacing:0px;color:#bbbbbb;">CRLF</div>
<div class="t" style="left:1397px;top:1270.14px;font-size:17.5px;letter-spacing:0px;color:#bbbbbb;">UTF-8</div>
<div class="t" style="left:1462px;top:1270.14px;font-size:17.5px;letter-spacing:0px;color:#bbbbbb;">4 spaces</div>
<svg class="a" style="left:1545px;top:1270px" width="20" height="20"><rect x="1" y="9" width="12" height="10" fill="#afb1b3"/><path d="M10 9V5A4 4 0 0 1 18 5V8" stroke="#afb1b3" stroke-width="2" fill="none"/></svg>
<svg class="a" style="left:1582px;top:1269px" width="20" height="22"><rect x="3" y="2" width="14" height="6" rx="2" fill="#afb1b3"/><rect x="0" y="7" width="20" height="2" fill="#afb1b3"/><circle cx="10" cy="13" r="5" fill="#afb1b3"/><path d="M2 22Q10 14 18 22Z" fill="#afb1b3"/><rect x="5" y="11" width="10" height="2" fill="#3c3f41"/></svg>
<div class="a" style="left:564px;top:39px;width:568px;height:524px;background:#3c3f41;border:1px solid #515151;border-top:none"></div>
<div class="t" style="left:602px;top:46.76px;font-size:18px;letter-spacing:-0.46px;color:#bbbbbb;">R<u>u</u>n 'TitlePrefixPluginSearchLifeCyclePluginTest'</div>
<div class="t" style="right:504px;top:46.76px;font-size:18px;letter-spacing:-0.2px;color:#bbbbbb;">Shift+F10</div>
<svg class="a" style="left:576px;top:47.2px" width="15" height="18"><path d="M0 0L15 9.0L0 18Z" fill="#499c54"/></svg>
<div class="t" style="left:602px;top:78.96px;font-size:18px;letter-spacing:-0.36px;color:#bbbbbb;"><u>D</u>ebug 'TitlePrefixPluginSearchLifeCyclePluginTest'</div>
<div class="t" style="right:504px;top:78.96px;font-size:18px;letter-spacing:-0.11px;color:#bbbbbb;">Shift+F9</div>
<svg class="a" style="left:573px;top:75.9px" width="18" height="22" viewBox="0 0 18 22"><path d="M4.5 0.5L8 4.5M13.5 0.5L10 4.5" stroke="#499c54" stroke-width="2"/><path d="M3 7Q3 3.5 9 3.5Q15 3.5 15 7V15Q15 21.5 9 21.5Q3 21.5 3 15Z" fill="#499c54"/><rect x="0" y="6" width="18" height="2" fill="#499c54"/><rect x="0" y="11.5" width="18" height="2" fill="#499c54"/><rect x="0" y="16.5" width="18" height="2" fill="#499c54"/><rect x="6" y="9" width="6" height="2" fill="#3c3f41"/><rect x="6" y="13" width="6" height="2" fill="#3c3f41"/></svg>
<div class="t" style="left:602px;top:109.56px;font-size:18px;letter-spacing:-0.37px;color:#bbbbbb;">Run 'TitlePrefixPluginSearchLifeCyclePluginTest' with Co<u>v</u>erage</div>
<svg class="a" style="left:571px;top:110.0px" width="24" height="22" viewBox="0 0 24 22"><path d="M0.5 2Q8 -0.5 16 2V7H12V4H8V15.5H12V16.5Q10 18 8 18.5Q1 15 0.5 9Z" fill="#afb1b3"/><path d="M11.5 7L23.5 14L11.5 21.5Z" fill="#499c54" stroke="#3c3f41" stroke-width="1.2"/></svg>
<div class="t" style="left:602px;top:145.46px;font-size:18px;letter-spacing:-1.0px;color:#bbbbbb;">Run...</div>
<div class="t" style="right:504px;top:145.46px;font-size:18px;letter-spacing:0.13px;color:#bbbbbb;">Alt+Shift+F10</div>
<svg class="a" style="left:576px;top:145.9px" width="15" height="18"><path d="M0 0L15 9.0L0 18Z" fill="#499c54"/></svg>
<div class="t" style="left:602px;top:177.76px;font-size:18px;letter-spacing:-0.39px;color:#bbbbbb;">Debug...</div>
<div class="t" style="right:504px;top:177.76px;font-size:18px;letter-spacing:0.09px;color:#bbbbbb;">Alt+Shift+F9</div>
<svg class="a" style="left:573px;top:174.7px" width="18" height="22" viewBox="0 0 18 22"><path d="M4.5 0.5L8 4.5M13.5 0.5L10 4.5" stroke="#499c54" stroke-width="2"/><path d="M3 7Q3 3.5 9 3.5Q15 3.5 15 7V15Q15 21.5 9 21.5Q3 21.5 3 15Z" fill="#499c54"/><rect x="0" y="6" width="18" height="2" fill="#499c54"/><rect x="0" y="11.5" width="18" height="2" fill="#499c54"/><rect x="0" y="16.5" width="18" height="2" fill="#499c54"/><rect x="6" y="9" width="6" height="2" fill="#3c3f41"/><rect x="6" y="13" width="6" height="2" fill="#3c3f41"/></svg>
<div class="t" style="left:602px;top:208.56px;font-size:18px;letter-spacing:-0.35px;color:#bbbbbb;">Attach to Process...</div>
<div class="t" style="right:504px;top:208.56px;font-size:18px;letter-spacing:0.06px;color:#bbbbbb;">Ctrl+Alt+F5</div>
<svg class="a" style="left:573px;top:205.5px" width="24" height="23" viewBox="0 0 24 23"><path d="M4.5 0.5L8 4.5M13.5 0.5L10 4.5" stroke="#499c54" stroke-width="2"/><path d="M3 7Q3 3.5 9 3.5Q15 3.5 15 7V10H9V21.5Q3 21 3 15Z" fill="#499c54"/><rect x="0" y="6" width="18" height="2" fill="#499c54"/><rect x="0" y="11.5" width="9" height="2" fill="#499c54"/><rect x="0" y="16.5" width="9" height="2" fill="#499c54"/><path d="M12 22L21 13M14.5 12.5H21.5V19.5" stroke="#afb1b3" stroke-width="2.6" fill="none"/></svg>
<div class="t" style="left:602px;top:240.76px;font-size:18px;letter-spacing:-0.2px;color:#bbbbbb;">Edit Configu<u>r</u>ations...</div>
<div class="t" style="left:602px;top:277.06px;font-size:18px;letter-spacing:0.1px;color:#838383;">Stop</div>
<div class="t" style="right:504px;top:277.06px;font-size:18px;letter-spacing:-0.2px;color:#838383;">Ctrl+F2</div>
<div class="a" style="left:574px;top:279.0px;width:15px;height:15px;background:#5b5b5b"></div>
<div class="t" style="left:602px;top:308.06px;font-size:18px;letter-spacing:-0.41px;color:#838383;">Stop Background Processes...</div>
<div class="t" style="right:504px;top:308.06px;font-size:18px;letter-spacing:-0.02px;color:#838383;">Ctrl+Shift+F2</div>
<div class="t" style="left:602px;top:339.56px;font-size:18px;letter-spacing:-0.26px;color:#838383;">Show Running List</div>
<div class="t" style="left:602px;top:376.06px;font-size:18px;letter-spacing:0.18px;color:#bbbbbb;">Debugging Actions</div>
<svg class="a" style="left:1111px;top:378.0px" width="10" height="12"><path d="M0 0L10 6L0 12Z" fill="#bbbbbb"/></svg>
<div class="t" style="left:602px;top:407.76px;font-size:18px;letter-spacing:0px;color:#bbbbbb;">Toggle Breakpoint</div>
<svg class="a" style="left:1111px;top:409.7px" width="10" height="12"><path d="M0 0L10 6L0 12Z" fill="#bbbbbb"/></svg>
<div class="t" style="left:602px;top:439.26px;font-size:18px;letter-spacing:-0.43px;color:#bbbbbb;">View Brea<u>k</u>points...</div>
<div class="t" style="right:504px;top:439.26px;font-size:18px;letter-spacing:-0.02px;color:#bbbbbb;">Ctrl+Shift+F8</div>
<svg class="a" style="left:572px;top:437.7px" width="22" height="22"><circle cx="15" cy="8" r="6" fill="#c75450"/><circle cx="9" cy="13" r="8" fill="#3c3f41"/><circle cx="9" cy="13" r="7" fill="#c75450"/></svg>
<div class="t" style="left:602px;top:475.66px;font-size:18px;letter-spacing:0px;color:#bbbbbb;">Test History</div>
<svg class="a" style="left:1111px;top:477.6px" width="10" height="12"><path d="M0 0L10 6L0 12Z" fill="#bbbbbb"/></svg>
<svg class="a" style="left:571px;top:474.1px" width="22" height="22"><circle cx="11" cy="11" r="9.5" stroke="#afb1b3" stroke-width="2.2" fill="none"/><path d="M11 5V11L15 14" stroke="#afb1b3" stroke-width="2.2" fill="none"/></svg>
<div class="t" style="left:602px;top:506.76px;font-size:18px;letter-spacing:-0.07px;color:#bbbbbb;">Import Tests from File...</div>
<svg class="a" style="left:573px;top:506.20000000000005px" width="20" height="20"><path d="M1 3V19H17" stroke="#afb1b3" stroke-width="2.4" fill="none"/><path d="M6 14L18 2M6 7V14H13" stroke="#afb1b3" stroke-width="2.4" fill="none"/></svg>
<div class="t" style="left:602px;top:538.76px;font-size:18px;letter-spacing:-0.33px;color:#bbbbbb;">Show Code Co<u>v</u>erage Data</div>
<div class="t" style="right:504px;top:538.76px;font-size:18px;letter-spacing:0.06px;color:#bbbbbb;">Ctrl+Alt+F6</div>
<div class="a" style="left:565px;top:136px;width:566px;height:2px;background:#4b4d4f"></div>
<div class="a" style="left:565px;top:266px;width:566px;height:2px;background:#4b4d4f"></div>
<div class="a" style="left:565px;top:365px;width:566px;height:2px;background:#4b4d4f"></div>
<div class="a" style="left:565px;top:464px;width:566px;height:2px;background:#4b4d4f"></div>
<div class="a" style="left:559px;top:36px;width:576px;height:42px;border:8px solid #ff0f5a;border-radius:6px"></div>
<div class="a" style="left:78px;top:742px;width:532px;height:485px;border:8px solid #ff0f5a;border-radius:6px"></div>
<div class="a" style="left:619px;top:817px;width:915px;height:232px;border:8px solid #ff0f5a;border-radius:6px"></div>
<div class="t" style="left:1116.7px;top:28.3px;font-size:48px;line-height:48px;letter-spacing:0;font-weight:bold;color:#ff0f5a;-webkit-text-stroke:6px #ffffff;paint-order:stroke fill;filter:drop-shadow(1px 2px 1.5px rgba(0,0,0,0.45))">a</div>
<div class="t" style="left:543.8px;top:1162.4px;font-size:48px;line-height:48px;letter-spacing:0;font-weight:bold;color:#ff0f5a;-webkit-text-stroke:6px #ffffff;paint-order:stroke fill;filter:drop-shadow(1px 2px 1.5px rgba(0,0,0,0.45))">b</div>
<div class="t" style="left:1448px;top:986.4px;font-size:48px;line-height:48px;letter-spacing:0;font-weight:bold;color:#ff0f5a;-webkit-text-stroke:6px #ffffff;paint-order:stroke fill;filter:drop-shadow(1px 2px 1.5px rgba(0,0,0,0.45))">c</div>
</body></html>
